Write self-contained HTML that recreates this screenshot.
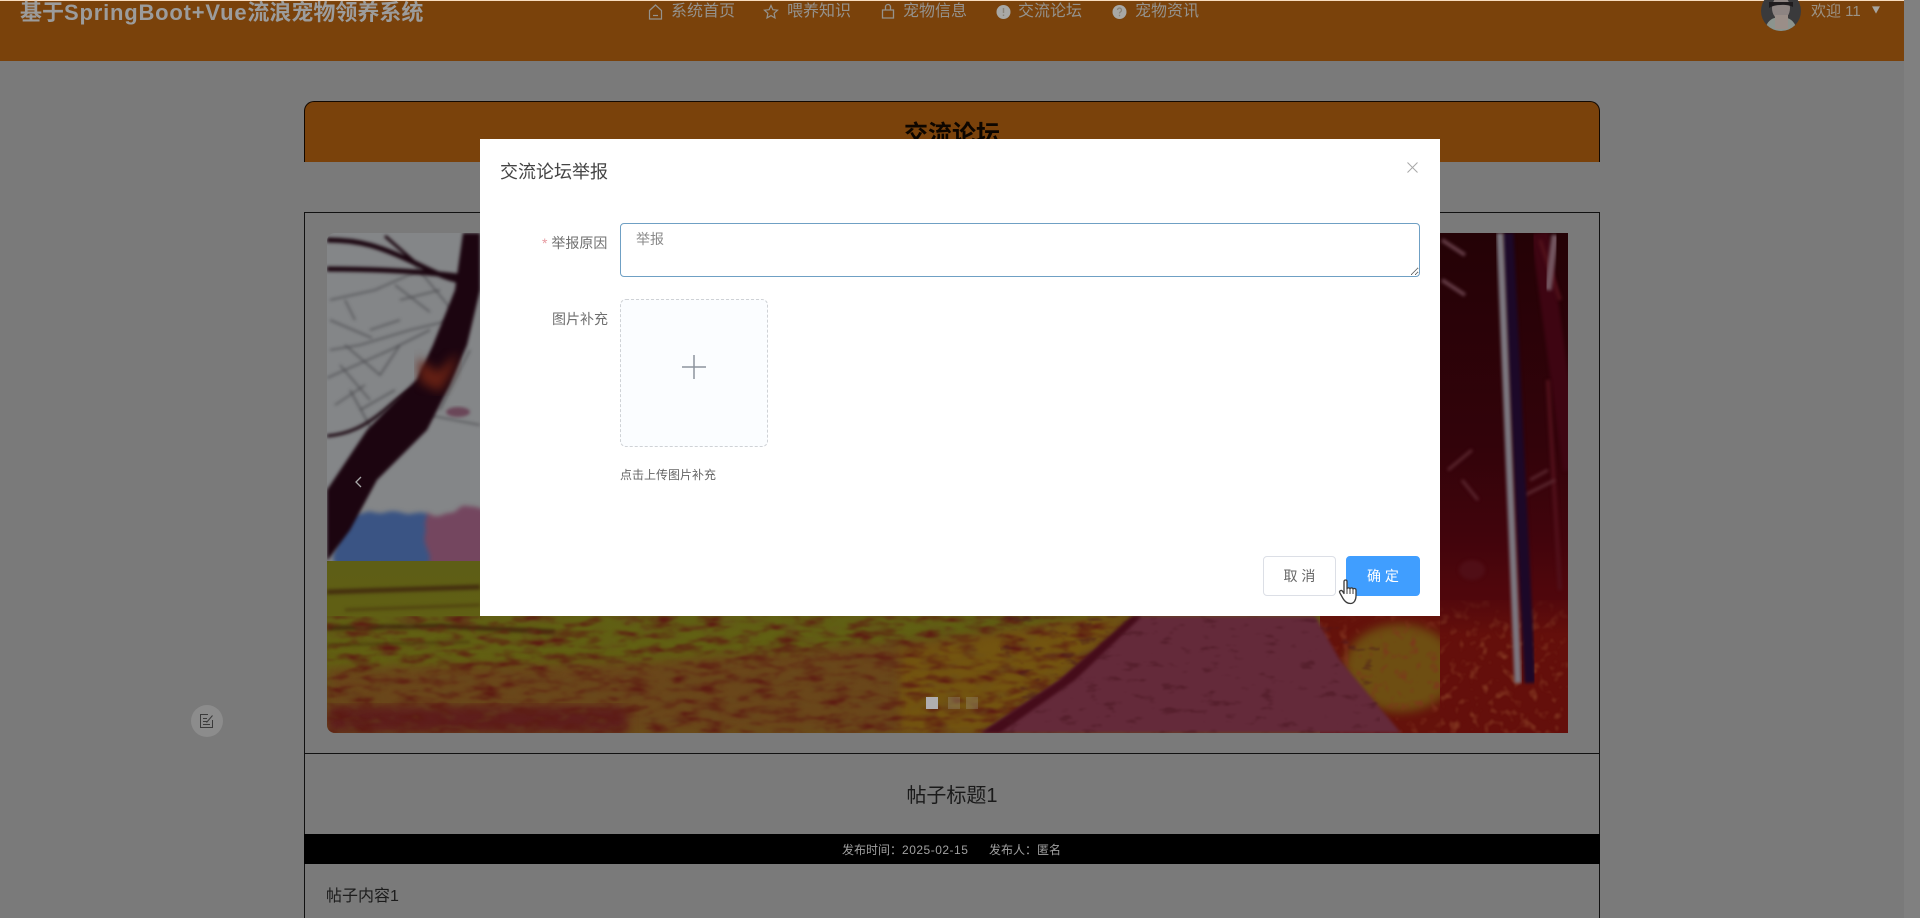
<!DOCTYPE html>
<html lang="zh-CN">
<head>
<meta charset="utf-8">
<title>基于SpringBoot+Vue流浪宠物领养系统</title>
<style>
html,body{margin:0;padding:0;width:1920px;height:918px;overflow:hidden;background:#7a7a7a}
body{position:relative;font-family:"Liberation Sans","Noto Sans CJK SC",sans-serif;color:#333}
.abs{position:absolute;white-space:nowrap}
.scroll{position:absolute;left:1904px;top:0;width:16px;height:918px;background:#808080}
.header{position:absolute;left:0;top:0;width:1904px;height:61px;background:#7a420b;border-top:1px solid #f7dcc0;box-sizing:border-box}
.logo{left:20px;top:-4px;font-size:22px;line-height:34px;font-weight:700;color:#9c9c9c}
.logo span{letter-spacing:.8px}
.nav{top:0;font-size:16px;line-height:24px;color:#95928d}
.navi{position:absolute;top:3px}
.card{position:absolute;left:304px;top:101px;width:1296px;height:61px;box-sizing:border-box;background:#7a420b;border:1px solid #120800;border-bottom:0;border-radius:10px 10px 0 0}
.card div{position:absolute;left:0;right:0;top:16px;text-align:center;font-size:24px;line-height:34px;font-weight:700;color:#0d0600}
.box{position:absolute;left:304px;top:212px;width:1296px;height:720px;box-sizing:border-box;border:1px solid #111}
.hr{position:absolute;left:304px;top:753px;width:1296px;height:1px;background:#111}
.photobox{position:absolute;left:327px;top:233px;width:1241px;height:500px;border-radius:8px 0 0 8px;overflow:hidden;background:#848688}
.photo{position:absolute;left:0;top:0;width:1241px;height:500px}
.dot{position:absolute;top:697px;width:12px;height:12px}
.ptitle{left:304px;width:1296px;top:782px;text-align:center;font-size:20px;line-height:28px;color:#1a1a1a}
.bar{position:absolute;left:304px;top:834px;width:1296px;height:30px;background:#000}
.meta{top:841px;font-size:12px;line-height:18px;color:#a0a0a0}
.meta span{letter-spacing:.5px}
.pcontent{left:326px;top:885px;font-size:16px;line-height:24px;color:#1c1c1c}
.float{position:absolute;left:191px;top:705px;width:32px;height:32px;border-radius:50%;background:#8c8c8c}
.dialog{position:absolute;left:480px;top:139px;width:960px;height:477px;background:#fff}
.dtitle{left:500px;top:159px;font-size:18px;line-height:26px;color:#444}
.label{font-size:14px;line-height:20px;color:#6f6f6f}
.req{color:#e79aa0}
textarea{position:absolute;left:620px;top:223px;width:800px;height:54px;box-sizing:border-box;padding:5px 15px;margin:0;border:1px solid #6fa0c4;border-radius:4px;outline:0;background:#fff;font:14px/21px "Liberation Sans","Noto Sans CJK SC",sans-serif;color:#777;resize:vertical}
textarea::placeholder{color:#8a8a8a;opacity:1}
.upload{position:absolute;left:620px;top:299px;width:148px;height:148px;box-sizing:border-box;border:1px dashed #cfd2d6;border-radius:6px;background:#fbfdff}
.tip{left:620px;top:466px;font-size:12px;line-height:18px;color:#666}
.btn{position:absolute;top:556px;height:40px;box-sizing:border-box;border-radius:4px;font-size:14px;line-height:38px;text-align:center;border:1px solid #dcdfe6;background:#fff;color:#666}
.primary{background:#409eff;border-color:#409eff;color:#fff}
</style>
</head>
<body>
<div class="scroll"></div>

<div class="header"></div>
<div class="abs logo">基于<span>SpringBoot+Vue</span>流浪宠物领养系统</div>

<svg class="navi" style="left:648px" width="15" height="18" viewBox="0 0 15 18" fill="none" stroke="#95928d" stroke-width="1.2"><path d="M1.5 7.5 7.5 2l6 5.5V16h-12z"/><path d="M5 12.5h5"/></svg>
<div class="abs nav" style="left:671px">系统首页</div>
<svg class="navi" style="left:763px" width="16" height="18" viewBox="0 0 16 18" fill="none" stroke="#95928d" stroke-width="1.2"><path d="m8 2.5 1.9 4.2 4.6.5-3.4 3.1.9 4.6L8 12.6l-4 2.3.9-4.6L1.500 7.200l4.600-.5z"/></svg>
<div class="abs nav" style="left:787px">喂养知识</div>
<svg class="navi" style="left:881px" width="14" height="18" viewBox="0 0 14 18" fill="none" stroke="#95928d" stroke-width="1.3"><path d="M1.500 7h11v8h-11z"/><path d="M4.500 7V4a2.500 2.500 0 0 1 5 0v3"/></svg>
<div class="abs nav" style="left:903px">宠物信息</div>
<svg class="navi" style="left:996px" width="15" height="18" viewBox="0 0 15 18"><circle cx="7.500" cy="9" r="7" fill="#a8a8a6"/><path d="M7.500 5v5M7.500 11.500v1.500" stroke="#8a8378" stroke-width="1.400"/></svg>
<div class="abs nav" style="left:1018px">交流论坛</div>
<svg class="navi" style="left:1112px" width="15" height="18" viewBox="0 0 15 18"><circle cx="7.500" cy="9" r="7" fill="#a8a8a6"/><path d="M5.500 7a2 2 0 1 1 3 1.800c-.7.400-1 .8-1 1.700M7.500 11.800v1.400" fill="none" stroke="#8a8378" stroke-width="1.300"/></svg>
<div class="abs nav" style="left:1135px">宠物资讯</div>

<svg class="abs" style="left:1761px;top:0" width="40" height="32" viewBox="0 0 40 32">
<defs><clipPath id="av"><circle cx="20" cy="11" r="20"/></clipPath></defs>
<g clip-path="url(#av)">
<rect width="40" height="32" fill="#3a3a3c"/>
<ellipse cx="20" cy="8" rx="9" ry="12" fill="#8d8482"/>
<path d="M4 32c1-12 8-15 16-15s15 4 16 15z" fill="#8c948e"/>
<rect x="14" y="15" width="13" height="14" fill="#9a8e88"/>
<path d="M8 2h24v5c-5-3-18-3-24 1z" fill="#1f1c1e"/>
</g></svg>
<div class="abs nav" style="left:1811px;top:0;font-size:15px;color:#9c9386">欢迎 11</div>
<svg class="abs" style="left:1872px;top:6px" width="8" height="8" viewBox="0 0 10 9"><path d="M0 0h10L5 9z" fill="#a8a5a0"/></svg>

<div class="card"><div>交流论坛</div></div>

<div class="box"></div>

<div class="photobox">
<svg class="photo" viewBox="327 233 1241 500" preserveAspectRatio="none">
<defs>
<filter id="soft" x="-20%" y="-20%" width="140%" height="140%" color-interpolation-filters="sRGB"><feGaussianBlur stdDeviation="1.500"/></filter>
<filter id="soft4" x="-10%" y="-10%" width="120%" height="120%" color-interpolation-filters="sRGB"><feGaussianBlur stdDeviation="5"/></filter>
<filter id="soft8" x="-20%" y="-20%" width="140%" height="140%" color-interpolation-filters="sRGB"><feTurbulence type="fractalNoise" baseFrequency=".03" numOctaves="2" seed="3" result="t"/><feDisplacementMap in="SourceGraphic" in2="t" scale="26"/><feGaussianBlur stdDeviation="2.500"/></filter>
<filter id="nRed" x="0" y="0" width="100%" height="100%" color-interpolation-filters="sRGB"><feTurbulence type="fractalNoise" baseFrequency=".04 .13" numOctaves="3" seed="4"/><feColorMatrix type="matrix" values="0 0 0 0 .36 0 0 0 0 .1 0 0 0 0 .07 2.500 0 0 0 -1.100"/><feGaussianBlur stdDeviation="1"/></filter>
<filter id="nTan" x="0" y="0" width="100%" height="100%" color-interpolation-filters="sRGB"><feTurbulence type="fractalNoise" baseFrequency=".05 .12" numOctaves="3" seed="21"/><feColorMatrix type="matrix" values="0 0 0 0 .4 0 0 0 0 .3 0 0 0 0 .12 3 0 0 0 -1.500"/><feGaussianBlur stdDeviation="1"/></filter>
<filter id="nLeaf" x="0" y="0" width="100%" height="100%" color-interpolation-filters="sRGB"><feTurbulence type="fractalNoise" baseFrequency=".1" numOctaves="2" seed="9"/><feColorMatrix type="matrix" values="0 0 0 0 .5 0 0 0 0 .2 0 0 0 0 .12 3.500 0 0 0 -1.900"/><feGaussianBlur stdDeviation=".8"/></filter>
<filter id="nDark" x="0" y="0" width="100%" height="100%" color-interpolation-filters="sRGB"><feTurbulence type="fractalNoise" baseFrequency=".05 .13" numOctaves="3" seed="13"/><feColorMatrix type="matrix" values="0 0 0 0 .28 0 0 0 0 .08 0 0 0 0 .12 6 0 0 0 -3.700"/><feGaussianBlur stdDeviation=".8"/></filter>
<linearGradient id="dark" x1="0" y1="0" x2="0" y2="1"><stop offset="0" stop-color="#240206"/><stop offset=".55" stop-color="#32030a"/><stop offset=".8" stop-color="#42040c"/><stop offset="1" stop-color="#58080c"/></linearGradient>
<linearGradient id="fade" x1="0" y1="0" x2="0" y2="1"><stop offset="0" stop-color="#4e060c"/><stop offset="1" stop-color="#4e060c" stop-opacity="0"/></linearGradient>
<linearGradient id="fieldG" x1="0" y1="0" x2="0" y2="1"><stop offset="0" stop-color="#5e5e16"/><stop offset=".6" stop-color="#626012"/><stop offset="1" stop-color="#6c5018"/></linearGradient>
<clipPath id="rgt"><rect x="1440" y="233" width="128" height="500"/></clipPath>
<clipPath id="low"><rect x="327" y="616" width="1241" height="117"/></clipPath>
</defs>

<!-- horizon -->
<g filter="url(#soft8)">
<rect x="335" y="512" width="95" height="60" fill="#3a5484"/>
<rect x="425" y="510" width="120" height="62" fill="#74465f"/>
</g>

<!-- field -->
<rect x="327" y="561" width="1241" height="172" fill="url(#fieldG)"/>
<g filter="url(#soft)">
<path d="M327 592 480 587 M327 628 440 626 555 632" stroke="#45300f" stroke-width="5" fill="none"/>
<path d="M327 645 470 642M345 610 480 605" stroke="#524410" stroke-width="3" fill="none"/>
</g>
<!-- red-brown lower field -->
<path d="M327 668 640 662 930 640 1130 616 1568 616V733H327z" fill="#6a461a" filter="url(#soft4)"/>
<!-- centre yellow -->
<path d="M900 650 1130 612 1060 680 981 733H900z" fill="#735410" filter="url(#soft4)"/>
<rect x="327" y="706" width="300" height="27" fill="#5e1e1c" filter="url(#soft4)"/>
<path d="M327 668 640 662 930 640 1130 616V733H327z" filter="url(#nRed)"/>
<rect x="327" y="616" width="800" height="117" filter="url(#nTan)" opacity=".4"/>

<!-- right leaves base -->
<rect x="1320" y="616" width="248" height="117" fill="#64120b"/>
<ellipse cx="1400" cy="668" rx="56" ry="44" fill="#6e4e12" filter="url(#soft4)"/>
<rect x="1320" y="616" width="248" height="117" filter="url(#nLeaf)" opacity=".7"/>

<!-- path -->
<path d="M1136 616H1315L1340 660 1401 733H981L1060 680z" fill="#642a3a" filter="url(#soft)"/>
<path d="M1132 616 1060 680 981 733H1000L1075 680 1142 616z" fill="#450c1a" filter="url(#soft)"/>
<rect x="1000" y="616" width="380" height="117" filter="url(#nDark)" clip-path="url(#low)" opacity=".45"/>

<!-- right dark woods -->
<g clip-path="url(#rgt)">
<rect x="1440" y="233" width="128" height="385" fill="url(#dark)"/>
<rect x="1440" y="600" width="128" height="133" fill="#640f0b"/>
<rect x="1440" y="600" width="128" height="133" filter="url(#nLeaf)"/>
<rect x="1440" y="590" width="128" height="45" fill="url(#fade)"/>
<path d="M1540 233 1572 470" stroke="#3e0512" stroke-width="18" fill="none" filter="url(#soft)"/>
<path d="M1540 240 1560 300M1548 380 1560 590" stroke="#50101a" stroke-width="4" fill="none" filter="url(#soft)"/>
<path d="M1442 240 1465 255M1442 280 1465 295" stroke="#643c46" stroke-width="4" fill="none" filter="url(#soft)"/>
<path d="M1462 480 1478 500M1448 470 1472 450M1530 480 1548 470M1525 495 1555 480" stroke="#5a262e" stroke-width="3" fill="none" filter="url(#soft)"/>
<path d="M1555 235 1548 290" stroke="#745660" stroke-width="7" fill="none" filter="url(#soft)"/>
<path d="M1508 233 1530 683" stroke="#1c0828" stroke-width="11" fill="none" filter="url(#soft)"/>
<path d="M1500 233 1518 683" stroke="#7c7780" stroke-width="7" fill="none" filter="url(#soft)"/>
<ellipse cx="1472" cy="570" rx="13" ry="10" fill="#500e16" filter="url(#soft)"/>
</g>

<!-- trunk & branches -->
<g fill="none" stroke="#4a4a4e" stroke-width="1.300" filter="url(#soft)">
<path d="M330 300 375 290 420 270M330 350 360 345 410 330 452 320M345 345 380 375 400 345M327 378 390 350 430 330M360 410 395 390M370 330 400 320M345 300 355 320M340 365 370 400M400 300 440 290M330 320 372 338M395 285 430 312M335 405 365 385"/>
<path d="M428 415 480 425M440 410 470 350M350 390 372 430M415 265 460 320"/>
</g>
<g fill="none" stroke="#1b0610" filter="url(#soft)">
<path d="M327 240C360 240 380 246 417 264S450 278 465 282" stroke-width="5"/>
<path d="M327 269C370 269 420 271 465 277" stroke-width="5"/>
<path d="M385 236 417 264M327 436C350 434 365 425 377 416S400 395 413 389" stroke-width="3"/>
</g>
<path d="M463 233H480V290L467 345 450 385 427 430 377 480 350 530 327 561V490L367 430 417 379 433 345 455 290z" fill="#1c0510" filter="url(#soft)"/>
<path d="M418 358 438 372 458 352 452 372 440 392 420 382z" fill="#642014" filter="url(#soft4)"/>
<ellipse cx="458" cy="412" rx="12" ry="5" fill="#6a4658" filter="url(#soft)"/>

<!-- arrow -->
<path d="M361 477 356 482 361 487" fill="none" stroke="#a9a9a9" stroke-width="1.300"/>
</svg>
</div>

<div class="dot" style="left:926px;background:#b0aeb0"></div>
<div class="dot" style="left:948px;background:rgba(170,170,170,.25)"></div>
<div class="dot" style="left:966px;background:rgba(170,170,170,.25)"></div>

<div class="hr"></div>
<div class="abs ptitle">帖子标题1</div>
<div class="bar"></div>
<div class="abs meta" style="left:842px">发布时间：<span>2025-02-15</span></div>
<div class="abs meta" style="left:989px">发布人：匿名</div>
<div class="abs pcontent">帖子内容1</div>

<div class="float"></div>
<svg class="abs" style="left:199px;top:713px" width="16" height="16" viewBox="0 0 16 16" fill="none" stroke="#3a3a3a" stroke-width="1"><path d="M13.500 7v7.500h-12v-13H9"/><path d="M4 5.500h4M4 8.500h4M4 11.500h7M7.500 9.500l6-7"/></svg>

<!-- dialog -->
<div class="dialog"></div>
<div class="abs dtitle">交流论坛举报</div>
<svg class="abs" style="left:1407px;top:162px" width="11" height="11" viewBox="0 0 11 11"><path d="M.5.5l10 10M10.500.5l-10 10" stroke="#a8a8a8" stroke-width="1"/></svg>

<div class="abs label" style="left:542px;top:233px"><span class="req">*</span> 举报原因</div>
<textarea placeholder="举报"></textarea>

<div class="abs label" style="left:552px;top:309px">图片补充</div>
<div class="upload"></div>
<svg class="abs" style="left:682px;top:355px" width="24" height="24" viewBox="0 0 24 24"><path d="M0 12h24M12 0v24" stroke="#8c939d" stroke-width="1.500"/></svg>
<div class="abs tip">点击上传图片补充</div>

<div class="btn" style="left:1263px;width:73px">取 消</div>
<div class="btn primary" style="left:1346px;width:74px">确 定</div>

<svg class="abs" style="left:1338px;top:578px" width="22" height="28" viewBox="0 0 22 28">
<path d="M6 3.500c0-2 3-2 3 0V11c0-1.500 3-1.500 3 0 0-1.500 3-1.500 3 .3 0-1.200 3-1.200 3 .7V18c0 4-2 7.500-5.500 7.500S7 24 5 20.500L1.800 14.800c-1-1.800 1.500-3.200 2.700-1.500L6 15.500z" fill="#fff" stroke="#3c3c3c" stroke-width="1.300" stroke-linejoin="round"/>
<path d="M9 11v5M12 11v5M15 11.500V16" stroke="#3c3c3c" stroke-width="1"/>
</svg>
</body>
</html>
